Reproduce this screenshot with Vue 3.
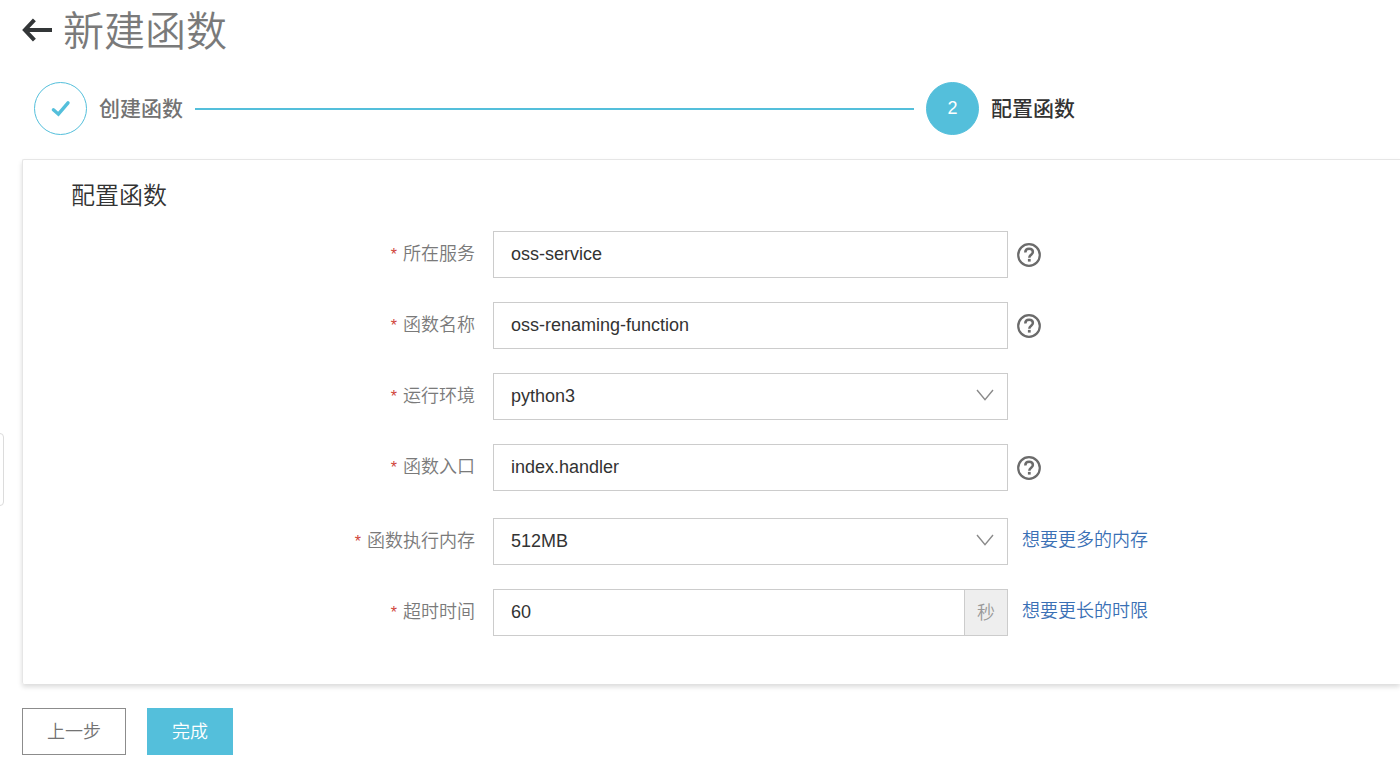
<script setup>
import { reactive } from 'vue'

const form = reactive({
  service: 'oss-service',
  name: 'oss-renaming-function',
  runtime: 'python3',
  handler: 'index.handler',
  memory: '512MB',
  timeout: '60',
})

const groups = [
  [
    { key: 'service', label: '所在服务', type: 'input', help: true },
    { key: 'name', label: '函数名称', type: 'input', help: true },
    { key: 'runtime', label: '运行环境', type: 'select' },
    { key: 'handler', label: '函数入口', type: 'input', help: true },
  ],
  [
    { key: 'memory', label: '函数执行内存', type: 'select', link: '想要更多的内存' },
    { key: 'timeout', label: '超时时间', type: 'input', unit: '秒', link: '想要更长的时限' },
  ],
]
</script>

<template>
  <main class="page">
    <button class="drawer-handle" type="button" aria-label="展开"></button>

    <header class="head">
      <a class="back" href="#" aria-label="返回">
        <svg width="30" height="24" viewBox="0 0 30 24" fill="none" stroke="#333638" stroke-width="4">
          <path d="M12.4 1.8 2.9 12l9.5 10.2M3 12h27" />
        </svg>
      </a>
      <h1>新建函数</h1>
    </header>

    <ol class="steps">
      <li class="step done">
        <span class="dot">
          <svg width="20" height="18" viewBox="0 0 20 18" fill="none" stroke="#54bfdb" stroke-width="3.4" stroke-linecap="round" stroke-linejoin="miter">
            <path d="M2.4 9.8 7.4 14.2 17 2.8" />
          </svg>
        </span>
        <span class="step-name">创建函数</span>
        <span class="line"></span>
      </li>
      <li class="step current">
        <span class="dot">2</span>
        <span class="step-name">配置函数</span>
      </li>
    </ol>

    <section class="card">
      <h2>配置函数</h2>
      <form class="form" @submit.prevent>
        <div v-for="(rows, i) in groups" :key="i" class="group">
          <div v-for="row in rows" :key="row.key" class="row">
            <label :for="row.key"><span class="star">*</span>{{ row.label }}</label>
            <div class="control">
              <template v-if="row.type === 'select'">
                <select :id="row.key" v-model="form[row.key]">
                  <option>{{ form[row.key] }}</option>
                </select>
                <svg class="chevron" width="18" height="12" viewBox="0 0 18 12" fill="none" stroke="#8a8a8a" stroke-width="1.4">
                  <path d="M1 1l8 9.6L17 1" />
                </svg>
              </template>
              <input v-else :id="row.key" v-model="form[row.key]" type="text" />
              <span v-if="row.unit" class="unit">{{ row.unit }}</span>
            </div>
            <div class="extra">
              <button v-if="row.help" class="help" type="button" aria-label="帮助">
                <svg width="24" height="24" viewBox="0 0 24 24" fill="none" stroke="#6b6b6b">
                  <circle cx="12" cy="12" r="10.8" stroke-width="2.2" />
                  <path d="M8.3 9.4c0-2.2 1.6-3.6 3.8-3.6s3.8 1.3 3.8 3.3c0 2.5-3.6 2.8-3.6 5.6" stroke-width="2.5" />
                  <path d="M10.9 15.9h2.8v2.7h-2.8z" fill="#6b6b6b" stroke="none" />
                </svg>
              </button>
              <a v-if="row.link" href="#">{{ row.link }}</a>
            </div>
          </div>
        </div>
      </form>
    </section>

    <footer class="actions">
      <button class="btn plain" type="button">上一步</button>
      <button class="btn primary" type="button">完成</button>
    </footer>
  </main>
</template>

<style>
body {
  margin: 0;
  background: #fff;
}
</style>

<style scoped>
* {
  box-sizing: border-box;
}

.page {
  position: relative;
  padding: 0 0 28px 22px;
  overflow: hidden;
  font-family: "Liberation Sans", "Noto Sans CJK SC", sans-serif;
  font-size: 18px;
  font-weight: 350;
  color: #333;
}

button {
  font: inherit;
  cursor: pointer;
}

.drawer-handle {
  position: absolute;
  left: -16px;
  top: 433px;
  width: 20px;
  height: 73px;
  padding: 0;
  border: 1px solid #dcdcdc;
  border-radius: 4px;
  background: #fff;
}

.head {
  display: flex;
  align-items: center;
  gap: 11px;
  height: 60px;
}

.back {
  display: flex;
}

h1 {
  margin: 0;
  padding-top: 4px;
  font-size: 41px;
  line-height: 56px;
  font-weight: 350;
  color: #7a7a7a;
}

.steps {
  display: grid;
  grid-template-columns: 32fr 17fr;
  margin: 22px 0 24px;
  padding: 0 0 0 12px;
  list-style: none;
}

.step {
  display: flex;
  align-items: center;
  gap: 12px;
}

.dot {
  display: flex;
  align-items: center;
  justify-content: center;
  width: 53px;
  height: 53px;
  border: 1px solid #54bfdb;
  border-radius: 50%;
}

.current .dot {
  background: #54bfdb;
  color: #fff;
}

.step-name {
  font-size: 21px;
  line-height: 30px;
  font-weight: 500;
  color: #737373;
}

.current .step-name {
  color: #333;
}

.line {
  flex: 1;
  height: 2px;
  margin-right: 12px;
  background: #54bfdb;
}

.card {
  padding: 18px 0 48px;
  border: 1px solid #e6e6e6;
  border-right: 0;
  border-bottom: 0;
  border-radius: 2px 0 0 2px;
  box-shadow: 0 3px 5px rgba(0, 0, 0, 0.14);
}

h2 {
  margin: 0 0 17px;
  padding-left: 48px;
  font-size: 24px;
  line-height: 36px;
  font-weight: 350;
}

.form {
  display: flex;
  flex-direction: column;
  gap: 27px;
}

.group {
  display: flex;
  flex-direction: column;
  gap: 24px;
}

.row {
  display: grid;
  grid-template-columns: 470fr 515fr 392fr;
  align-items: center;
}

label {
  padding-right: 18px;
  text-align: right;
  line-height: 28px;
  color: #7a7a7a;
}

.star {
  margin-right: 6px;
  font-size: 16px;
  color: #d0453a;
}

.control {
  position: relative;
  display: flex;
  min-width: 0;
  height: 47px;
  border: 1px solid #ccc;
}

input,
select {
  flex: 1;
  min-width: 0;
  margin: 0;
  padding: 0 17px;
  border: 0;
  border-radius: 0;
  outline: 0;
  appearance: none;
  background: transparent;
  font: inherit;
  color: #333;
}

select {
  padding-bottom: 2px;
}

.chevron {
  position: absolute;
  right: 13px;
  top: 15px;
  pointer-events: none;
}

.unit {
  display: flex;
  align-items: center;
  justify-content: center;
  width: 43px;
  padding-bottom: 4px;
  border-left: 1px solid #ccc;
  background: #eee;
  color: #999;
}

.extra {
  display: flex;
  align-items: center;
  padding-left: 9px;
}

.help {
  display: flex;
  padding: 0;
  border: 0;
  background: none;
}

.extra a {
  padding: 0 0 3px 5px;
  line-height: 28px;
  color: #3a70b5;
  text-decoration: none;
}

.actions {
  display: flex;
  gap: 21px;
  margin-top: 24px;
}

.btn {
  height: 47px;
  padding: 0 24px 4px;
  border: 1px solid #8c8c8c;
  background: #fff;
  color: #737373;
}

.primary {
  border-color: #54bfdb;
  background: #54bfdb;
  color: #fff;
}
</style>
